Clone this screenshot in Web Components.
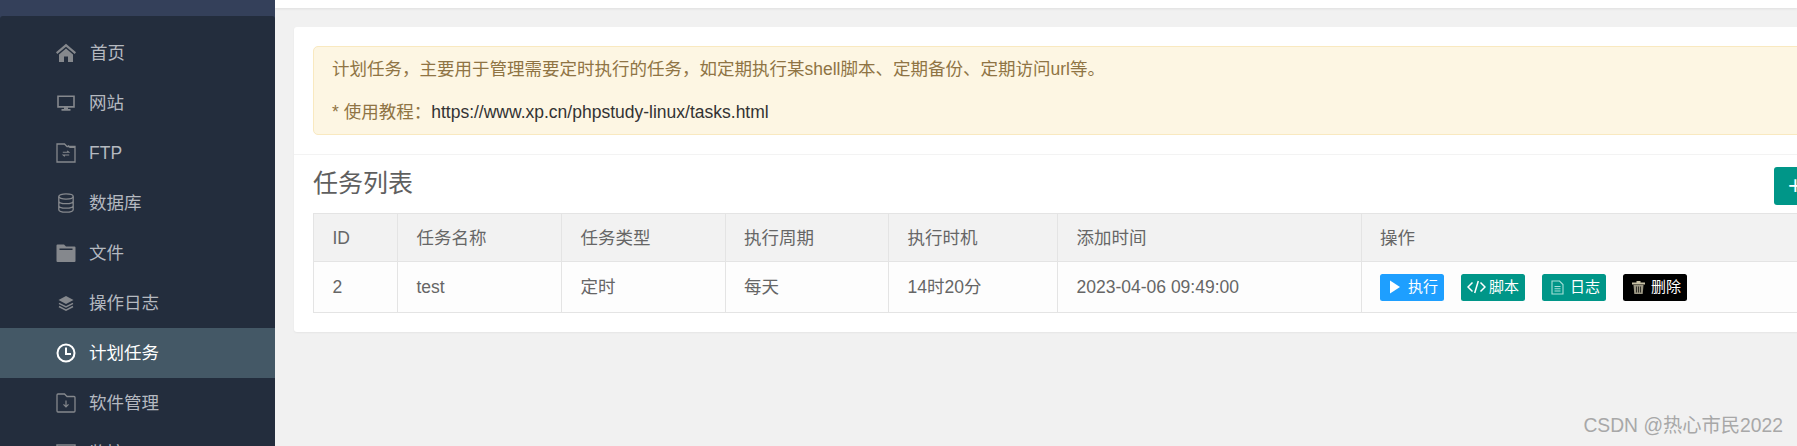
<!DOCTYPE html>
<html lang="zh">
<head>
<meta charset="utf-8">
<title>计划任务</title>
<style>
  html, body { margin: 0; height: 100%; overflow: hidden; background: #f1f1f1; }
  body { font-family: "Liberation Sans", "Noto Sans CJK SC", sans-serif; }
  notice-box a { color: #333; }
</style>
</head>
<body>
<app-shell>
  <side-nav slot="side">
    <nav-item shift="1">
      <svg slot="icon" width="20" height="20" viewBox="0 0 20 20"><path fill="currentColor" d="M10 .8 0 9.300l1.300 1.700L10 3.800l8.700 7.200 1.300-1.700zM3 11.400V19h5v-5.500h4V19h5v-7.600L10 5.400z"/></svg>
      首页
    </nav-item>
    <nav-item>
      <svg slot="icon" width="20" height="20" viewBox="0 0 20 20"><path fill="none" stroke="currentColor" stroke-width="1.600" d="M2 3.300h16v10.600H2z"/><path fill="currentColor" d="M8 14h4v2H8zM5.500 16h9v1.700h-9z"/></svg>
      网站
    </nav-item>
    <nav-item>
      <svg slot="icon" width="20" height="20" viewBox="0 0 20 20"><path fill="none" stroke="currentColor" stroke-width="1.300" d="M1 1h7.500l2.500 2.500h8V19H1z"/><path fill="none" stroke="currentColor" stroke-width="1.100" d="M12 2.500l2 2h5M6.800 9.200h6l-1.600-1.400M13.200 12H7.200l1.600 1.400"/></svg>
      FTP
    </nav-item>
    <nav-item>
      <svg slot="icon" width="20" height="20" viewBox="0 0 20 20"><g fill="none" stroke="currentColor" stroke-width="1.300"><ellipse cx="10" cy="3.500" rx="7.200" ry="2.600"/><path d="M2.800 3.500v13c0 1.500 3.200 2.700 7.200 2.700s7.200-1.200 7.200-2.700v-13M2.800 8c0 1.500 3.200 2.700 7.200 2.700s7.200-1.200 7.200-2.700M2.800 12.400c0 1.500 3.200 2.700 7.200 2.700s7.200-1.200 7.200-2.700"/></g></svg>
      数据库
    </nav-item>
    <nav-item>
      <svg slot="icon" width="20" height="20" viewBox="0 0 20 20"><path fill="currentColor" fill-rule="evenodd" d="M1.500 1.500h6.500l2 2h8.500q1 0 1 1V18q0 1-1 1H1.500q-1 0-1-1V2.500q0-1 1-1zM3.500 5.500v1.500h13V5.500z"/></svg>
      文件
    </nav-item>
    <nav-item>
      <svg slot="icon" width="20" height="20" viewBox="0 0 20 20"><path fill="currentColor" d="M10 3l7.500 4-7.500 4-7.500-4z"/><path fill="none" stroke="currentColor" stroke-width="1.500" d="M3 10.300l7 3.700 7-3.700M3 13.500l7 3.700 7-3.700"/></svg>
      操作日志
    </nav-item>
    <nav-item active>
      <svg slot="icon" width="20" height="20" viewBox="0 0 20 20"><circle cx="10" cy="10" r="8.500" fill="none" stroke="currentColor" stroke-width="2"/><path fill="none" stroke="currentColor" stroke-width="2" d="M10 4.500V11h5"/></svg>
      计划任务
    </nav-item>
    <nav-item>
      <svg slot="icon" width="20" height="20" viewBox="0 0 20 20"><path fill="none" stroke="currentColor" stroke-width="1.300" d="M2 1h6.500l2.500 2.500h7q1 0 1 1V18q0 1-1 1H2q-1 0-1-1V2q0-1 1-1z"/><path fill="none" stroke="currentColor" stroke-width="1.200" d="M10 7.500v6M7.500 11.300l2.500 2.500 2.500-2.500"/></svg>
      软件管理
    </nav-item>
    <nav-item>
      <svg slot="icon" width="20" height="20" viewBox="0 0 20 20"><path fill="none" stroke="currentColor" stroke-width="1.500" d="M1 2h18V17H1z"/></svg>
      监控
    </nav-item>
  </side-nav>

  <task-panel slot="main">
    <notice-box slot="notice">
      <p>计划任务，主要用于管理需要定时执行的任务，如定期执行某shell脚本、定期备份、定期访问url等。</p>
      <p>* 使用教程：<a>https://www.xp.cn/phpstudy-linux/tasks.html</a></p>
    </notice-box>
    <task-table slot="table">
      <action-button kind="blue" style="--gap:8px">
        <svg slot="icon" width="10" height="14" viewBox="0 0 10 14"><path fill="currentColor" d="M0 .5l10 6.500-10 6.500z"/></svg>
        执行
      </action-button>
      <action-button kind="green" style="--gap:3px">
        <svg slot="icon" width="19" height="14" viewBox="0 0 19 14"><path fill="none" stroke="currentColor" stroke-width="1.500" d="M5.500 2.500L1 7l4.500 4.500M13.500 2.500L18 7l-4.500 4.500M11.300 1L7.700 13"/></svg>
        脚本
      </action-button>
      <action-button kind="green" style="--gap:6px">
        <svg slot="icon" width="13" height="15" viewBox="0 0 13 15"><path fill="none" stroke="#a8e0d8" stroke-width="1.100" d="M1 1h7.500L12 4.500V14H1zM3.500 6.500h6M3.500 8.800h6M3.500 11h6"/></svg>
        日志
      </action-button>
      <action-button kind="black" style="--gap:5px">
        <svg slot="icon" width="15" height="15" viewBox="0 0 15 15"><path fill="#c9c2a6" d="M1 2.500h13V4.500H1zM5.500 1h4v1.500h-4z"/><path fill="#9a9582" d="M2.500 5h10l-.8 9H3.300z"/><path stroke="#33312a" d="M5.500 6.500v6M7.500 6.500v6M9.500 6.500v6"/></svg>
        删除
      </action-button>
    </task-table>
  </task-panel>
</app-shell>
<water-mark>CSDN @热心市民2022</water-mark>

<script>
class AppShell extends HTMLElement {
  constructor() {
    super();
    const shadow = this.attachShadow({ mode: "open" });
    shadow.innerHTML = `
      <style>
        :host { display: flex; width: 100%; height: 446px; overflow: hidden; }
        aside { flex: 0 0 275px; display: flex; flex-direction: column; background: #34405a; overflow: hidden; }
        main { flex: 1; min-width: 0; overflow: hidden; }
        .topbar { height: 8px; background: #fff; box-shadow: 0 1px 3px rgba(0,0,0,.08); }
      </style>
      <aside><slot name="side"></slot></aside>
      <main><div class="topbar"></div><slot name="main"></slot></main>
    `;
  }
}

class SideNav extends HTMLElement {
  constructor() {
    super();
    const shadow = this.attachShadow({ mode: "open" });
    shadow.innerHTML = `
      <style>
        :host { display: block; flex: 1; margin-top: 16px; padding-top: 12px; background: #232d3d; border-radius: 3px 3px 0 0; }
      </style>
      <slot></slot>
    `;
  }
}

class NavItem extends HTMLElement {
  constructor() {
    super();
    const shadow = this.attachShadow({ mode: "open" });
    shadow.innerHTML = `
      <style>
        :host { display: flex; align-items: center; height: 50px; padding-left: 56px; font-size: 17.5px; line-height: 24px; color: #b5b9c0; }
        :host([active]) { background: #445866; color: #fff; }
        .icon { flex: 0 0 33px; display: flex; color: #85888d; }
        :host([active]) .icon { color: #fff; }
      </style>
      <span class="icon"><slot name="icon"></slot></span>
      <span class="label"><slot></slot></span>
    `;
    // a few labels sit slightly off the common left edge
    const shift = this.getAttribute("shift");
    if (shift) shadow.querySelector(".label").style.marginLeft = shift + "px";
  }
}

class TaskPanel extends HTMLElement {
  constructor() {
    super();
    const shadow = this.attachShadow({ mode: "open" });
    shadow.innerHTML = `
      <style>
        :host { display: block; box-sizing: border-box; width: 1620px; height: 305px; margin: 19px 0 0 18.5px; background: #fff; border-radius: 3px; box-shadow: 0 1px 2px rgba(0,0,0,.05); color: #666; }
        .top { height: 108px; padding: 19px 19.5px 0; border-bottom: 1px solid #f3f3f3; }
        .body { padding: 12px 19.5px 0; }
        .head { display: flex; justify-content: space-between; align-items: flex-start; height: 38px; margin-bottom: 8px; }
        h2 { margin: 0; font-size: 25px; font-weight: 400; line-height: 32px; color: #5f5f5f; }
        button { width: 120px; height: 38px; padding: 0 0 0 14px; border: 0; border-radius: 3px; background: #009688; color: #fff; font: 17.5px/24px "Liberation Sans", "Noto Sans CJK SC", sans-serif; text-align: left; white-space: nowrap; }
        button b { font-size: 25px; font-weight: 400; }
      </style>
      <div class="top"><slot name="notice"></slot></div>
      <div class="body">
        <div class="head"><h2>任务列表</h2><button><b>+</b> 添加任务</button></div>
        <slot name="table"></slot>
      </div>
    `;
  }
}

class NoticeBox extends HTMLElement {
  constructor() {
    super();
    const shadow = this.attachShadow({ mode: "open" });
    shadow.innerHTML = `
      <style>
        :host { display: flex; flex-direction: column; justify-content: center; gap: 17px; box-sizing: border-box; height: 89px; padding: 0 18px 1px; background: #fdf6e3; border: 1px solid #f9e9c0; border-radius: 5px; font-size: 17.5px; line-height: 26px; color: #8f7444; }
        ::slotted(p) { margin: 0; }
      </style>
      <slot></slot>
    `;
  }
}

class TaskTable extends HTMLElement {
  constructor() {
    super();
    const shadow = this.attachShadow({ mode: "open" });
    const heads = ["ID", "任务名称", "任务类型", "执行周期", "执行时机", "添加时间", "操作"];
    const row = ["2", "test", "定时", "每天", "14时20分", "2023-04-06 09:49:00"];
    shadow.innerHTML = `
      <style>
        :host { display: block; }
        table { table-layout: fixed; width: 1581px; border-collapse: collapse; font-size: 17.5px; line-height: 24px; color: #666; }
        th, td { padding: 0 0 0 18.5px; border: 1px solid #e4e4e4; text-align: left; font-weight: 400; white-space: nowrap; }
        th { height: 47px; background: #f2f2f2; }
        td { height: 50px; background: #fdfdfd; }
        .actions { display: flex; gap: 17px; }
      </style>
      <table>
        <colgroup>
          <col style="width:84px"><col style="width:164px"><col style="width:163.5px"><col style="width:163.5px"><col style="width:169px"><col style="width:303.5px"><col>
        </colgroup>
        <thead><tr>${heads.map(h => `<th>${h}</th>`).join("")}</tr></thead>
        <tbody><tr>${row.map(c => `<td>${c}</td>`).join("")}<td><div class="actions"><slot></slot></div></td></tr></tbody>
      </table>
    `;
  }
}

class ActionButton extends HTMLElement {
  constructor() {
    super();
    const shadow = this.attachShadow({ mode: "open" });
    shadow.innerHTML = `
      <style>
        :host { display: inline-flex; align-items: center; justify-content: flex-end; gap: var(--gap, 6px); box-sizing: border-box; width: 64px; height: 27px; padding-right: 6px; border-radius: 2.5px; font-size: 15px; line-height: 20px; color: #fff; }
        :host([kind="blue"]) { background: #1e9fff; }
        :host([kind="green"]) { background: #009688; }
        :host([kind="black"]) { background: #000; }
        .icon { display: flex; }
      </style>
      <span class="icon"><slot name="icon"></slot></span>
      <span><slot></slot></span>
    `;
  }
}

class WaterMark extends HTMLElement {
  constructor() {
    super();
    const shadow = this.attachShadow({ mode: "open" });
    shadow.innerHTML = `
      <style>
        :host { position: absolute; right: 14px; bottom: 8px; font-size: 19.3px; line-height: 24px; color: #a8a8a8; white-space: nowrap; }
      </style>
      <slot></slot>
    `;
  }
}

customElements.define("app-shell", AppShell);
customElements.define("side-nav", SideNav);
customElements.define("nav-item", NavItem);
customElements.define("task-panel", TaskPanel);
customElements.define("notice-box", NoticeBox);
customElements.define("task-table", TaskTable);
customElements.define("action-button", ActionButton);
customElements.define("water-mark", WaterMark);
</script>
</body>
</html>
